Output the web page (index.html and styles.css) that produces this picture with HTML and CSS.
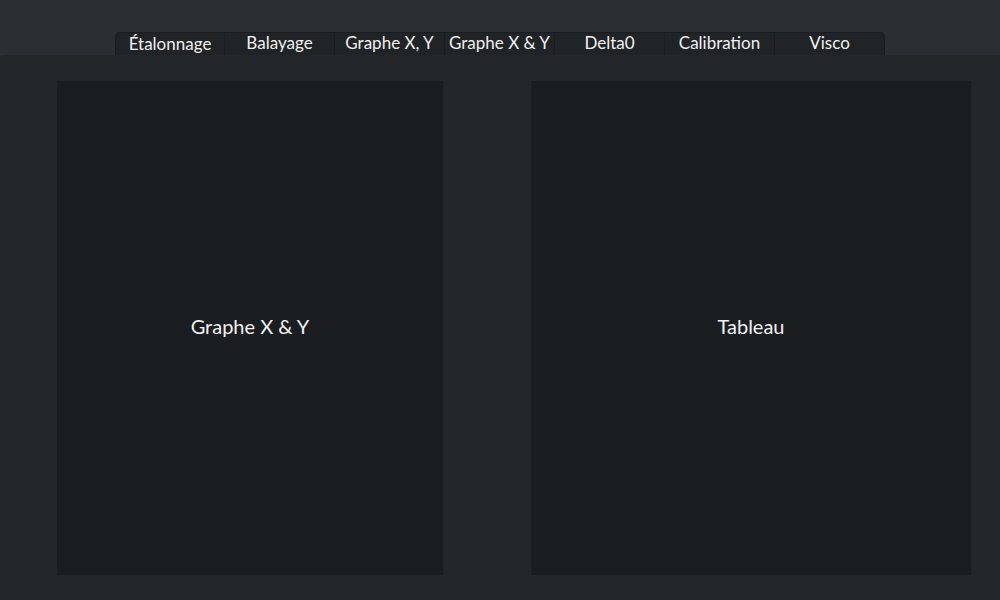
FILE: index.html
```html
<!DOCTYPE html>
<html lang="fr">
<head>
<meta charset="utf-8">
<title>Graphe X &amp; Y</title>
<link rel="stylesheet" href="styles.css">
</head>
<body>
<div class="app">
  <nav class="tabs">
    <div class="tab first">Étalonnage</div>
    <div class="tab">Balayage</div>
    <div class="tab">Graphe X, Y</div>
    <div class="tab">Graphe X &amp; Y</div>
    <div class="tab">Delta0</div>
    <div class="tab">Calibration</div>
    <div class="tab last">Visco</div>
  </nav>
  <main class="panel">
    <section class="card">Graphe X &amp; Y</section>
    <section class="card">Tableau</section>
  </main>
</div>
</body>
</html>
```
FILE: styles.css
```css
* { box-sizing: border-box; }
html, body {
  margin: 0;
  height: 100%;
  background: #2b2e33;
  font-family: Lato, "Noto Sans", sans-serif;
  color: #eeeeee;
}
.app {
  display: flex;
  flex-direction: column;
  height: 600px;
}
.tabs {
  display: flex;
  justify-content: center;
  padding-top: 32px;
  height: 55px;
}
.tab {
  width: 110px;
  height: 23px;
  background: #212427;
  border: 1px solid #1a1d20;
  border-bottom: none;
  border-left: none;
  font-size: 17px;
  line-height: 19px;
  text-align: center;
  white-space: nowrap;
  color: #f0f0f0;
}
.tab.first {
  border-left: 1px solid #1a1d20;
  border-top-left-radius: 5px;
  line-height: 22px;
}
.tab.last { border-top-right-radius: 5px; }
.panel {
  flex: 1;
  display: grid;
  grid-template-columns: 386px 440px;
  column-gap: 88px;
  padding: 26px 29px 25px 57px;
  background: #24272a;
  border-top-left-radius: 4px;
}
.card {
  background: #1b1e21;
  display: flex;
  align-items: center;
  justify-content: center;
  padding-bottom: 5px;
  font-size: 20px;
  color: #f2f2f2;
}
```
